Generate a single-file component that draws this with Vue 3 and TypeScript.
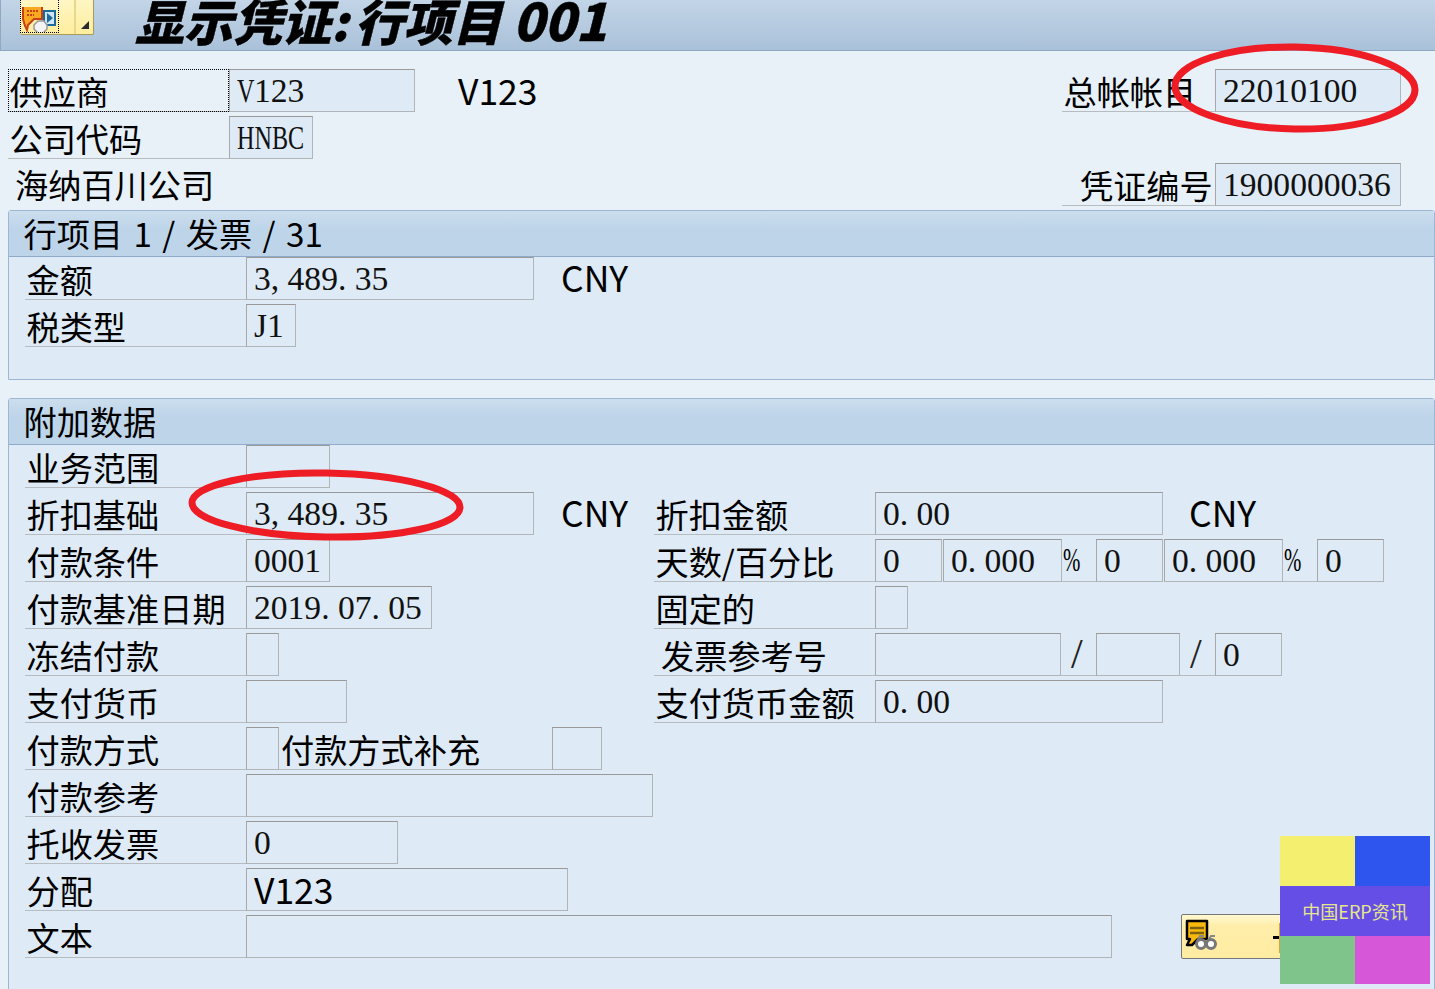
<script setup lang="ts">
interface Cell {
  kind: 'label' | 'field' | 'text' | 'gap'
  w: number
  text?: string
  narrow?: string
  narrowW?: number
  sans?: boolean
  line?: boolean
  sym?: 'pct' | 'slash'
  indent?: number
}

const lbl = (text: string, w = 221, indent = 1.5): Cell => ({ kind: 'label', w, text, indent })
const fld = (w: number, text = '', extra: Partial<Cell> = {}): Cell => ({ kind: 'field', w, text, ...extra })
const txt = (w: number, text: string, indent = 0): Cell => ({ kind: 'text', w, text, indent })
const gap = (w: number): Cell => ({ kind: 'gap', w })
const pct = (): Cell => ({ kind: 'text', w: 34, text: '%', indent: 1, sym: 'pct', line: true })
const slash = (indent: number): Cell => ({ kind: 'text', w: 35, text: '/', indent, sym: 'slash', line: true })

const topRows: Cell[][] = [
  [
    { ...lbl('供应商'), line: true },
    fld(186, '123', { narrow: 'V', narrowW: 17 }),
    txt(647, 'V123', 43),
    lbl('总帐帐目', 153),
    fld(186, '22010100')
  ],
  [lbl('公司代码'), fld(84, '', { narrow: 'HNBC', narrowW: 68 })],
  [
    txt(1054, '海纳百川公司', 7),
    lbl('凭证编号', 153, 18),
    fld(186, '1900000036')
  ]
]

const itemRows: Cell[][] = [
  [lbl('金额'), fld(288, '3, 489. 35'), txt(120, 'CNY', 27)],
  [lbl('税类型'), fld(50, 'J1')]
]

const extraRows: Cell[][] = [
  [lbl('业务范围'), fld(84)],
  [
    lbl('折扣基础'), fld(288, '3, 489. 35'), txt(120, 'CNY', 27),
    lbl('折扣金额'), fld(288, '0. 00'), txt(120, 'CNY', 26)
  ],
  [
    lbl('付款条件'), fld(84, '0001'), gap(324),
    lbl('天数/百分比'), fld(67, '0'), gap(1), fld(119, '0. 000'), pct(),
    fld(67, '0'), gap(1), fld(119, '0. 000'), pct(),
    fld(67, '0')
  ],
  [
    lbl('付款基准日期'), fld(186, '2019. 07. 05'), gap(222),
    lbl('固定的'), fld(33)
  ],
  [
    lbl('冻结付款'), fld(33), gap(375),
    lbl('发票参考号', 221, 7), fld(186), slash(10), fld(84), slash(10), fld(67, '0')
  ],
  [lbl('支付货币'), fld(101), gap(307), lbl('支付货币金额'), fld(288, '0. 00')],
  [lbl('付款方式'), fld(33), lbl('付款方式补充', 273, 2), fld(50)],
  [lbl('付款参考'), fld(407)],
  [lbl('托收发票'), fld(152, '0')],
  [lbl('分配'), fld(322, 'V123', { sans: true })],
  [lbl('文本'), fld(866)]
]

const cellStyle = (c: Cell) => ({ width: `${c.w}px`, paddingLeft: c.indent ? `${c.indent}px` : undefined })
const isLatin = (s = '') => /^[A-Z0-9]+$/.test(s)
</script>

<template>
  <div class="page">
    <header class="title-bar">
      <div class="tool-btn">
        <span class="tool-main">
          <svg width="36" height="32" viewBox="0 0 36 32">
            <rect x="23" y="4" width="11" height="14" fill="#cfe6f7" stroke="#1b6a9c" stroke-width="2" />
            <path d="M26 6l6 5-6 5z" fill="#1b6a9c" />
            <path d="M2 -2h19v14h-8l-6 6-1 5-2-4-2-7z" fill="#f9a91f" stroke="#c8401a" stroke-width="2" />
            <path d="M6 4h11M6 8h7" stroke="#c8401a" stroke-width="2" stroke-dasharray="2 1" />
            <path d="M17 14h6l3 4v4l-4 4h-5l-4-4v-4z" fill="#f4f4f4" stroke="#9a9a9a" stroke-width="1.5" />
          </svg>
        </span>
        <span class="tool-menu"><i></i></span>
      </div>
      <h1 class="title">显示凭证: 行项目 <span class="title-num">001</span></h1>
    </header>

    <section class="top-block">
      <div v-for="(row, r) in topRows" :key="r" class="row">
        <template v-for="(c, i) in row" :key="i">
          <div v-if="c.kind === 'label'" class="label" :class="{ focused: c.line }" :style="cellStyle(c)">{{ c.text }}</div>
          <div v-else-if="c.kind === 'field'" class="field" :style="cellStyle(c)"><span v-if="c.narrow" class="narrow" :style="{ width: `${c.narrowW}px` }">{{ c.narrow }}</span>{{ c.text }}</div>
          <div v-else class="plain" :class="{ latin: isLatin(c.text) }" :style="cellStyle(c)">{{ c.text }}</div>
        </template>
      </div>
    </section>

    <section class="group first">
      <div class="group-head">行项目 1 / 发票 / 31</div>
      <div v-for="(row, r) in itemRows" :key="r" class="row">
        <template v-for="(c, i) in row" :key="i">
          <div v-if="c.kind === 'label'" class="label" :style="cellStyle(c)">{{ c.text }}</div>
          <div v-else-if="c.kind === 'field'" class="field" :style="cellStyle(c)">{{ c.text }}</div>
          <div v-else class="plain" :class="{ latin: isLatin(c.text) }" :style="cellStyle(c)">{{ c.text }}</div>
        </template>
      </div>
    </section>

    <section class="group second">
      <div class="group-head">附加数据</div>
      <div v-for="(row, r) in extraRows" :key="r" class="row">
        <template v-for="(c, i) in row" :key="i">
          <div v-if="c.kind === 'label'" class="label" :style="cellStyle(c)">{{ c.text }}</div>
          <div v-else-if="c.kind === 'field'" class="field" :class="{ sans: c.sans }" :style="cellStyle(c)">{{ c.text }}</div>
          <div v-else-if="c.kind === 'gap'" :style="cellStyle(c)"></div>
          <div v-else class="plain" :class="{ latin: isLatin(c.text), under: c.line, slash: c.sym === 'slash', pct: c.sym === 'pct' }" :style="cellStyle(c)"><span v-if="c.sym === 'pct'" class="narrow pct-glyph">{{ c.text }}</span><template v-else>{{ c.text }}</template></div>
        </template>
      </div>
    </section>

    <button class="long-text">
      <svg width="36" height="36" viewBox="0 0 36 36">
        <path d="M3 2h20v18h-9l-6 6H3l3-6H3z" fill="#f9b90c" stroke="#000" stroke-width="2.5" stroke-linejoin="round" />
        <path d="M6 9h14M6 14h14" stroke="#7d6212" stroke-width="2.5" />
        <path d="M13 22l3-5h4M24 22l3-5h4" fill="none" stroke="#888" stroke-width="2" />
        <circle cx="17" cy="25" r="4.5" fill="#fff" stroke="#777" stroke-width="3" />
        <circle cx="27" cy="25" r="4.5" fill="#fff" stroke="#777" stroke-width="3" />
      </svg>
      <span class="mark-h"></span>
      <span class="mark-v"></span>
    </button>

    <div class="stamp">
      <div class="yellow"></div>
      <div class="blue"></div>
      <div class="purple">中国ERP资讯</div>
      <div class="green"></div>
      <div class="pink"></div>
    </div>

    <svg class="marks" width="1435" height="989" viewBox="0 0 1435 989">
      <ellipse cx="1295" cy="88" rx="120" ry="41" transform="rotate(1 1295 88)" />
      <ellipse cx="326" cy="505" rx="134" ry="32" transform="rotate(1 326 505)" />
    </svg>
  </div>
</template>

<style scoped>
.page {
  position: relative;
  width: 1435px;
  height: 989px;
  overflow: hidden;
  background: #e8f0f8;
  color: #000;
  font-family: "Noto Sans CJK SC", "Noto Sans", sans-serif;
  font-size: 33.2px;
}

.title-bar {
  display: flex;
  align-items: flex-start;
  height: 51px;
  box-sizing: border-box;
  padding-left: 19px;
  overflow: hidden;
  background: linear-gradient(#c3d5e7, #a9c1d9);
  border-bottom: 1px solid #8fa9c4;
  border-left: 1px solid #8fa9c4;
}

.tool-btn {
  display: flex;
  flex: none;
  height: 34px;
  width: 73px;
  background: linear-gradient(#fff6c4, #ffee9e);
  border-bottom: 1px solid #a89a5a;
  border-right: 1px solid #a89a5a;
  border-radius: 0 0 2px 2px;
}

.tool-main {
  flex: none;
  width: 39px;
  height: 33px;
  border: 1px dotted #000;
  border-top: none;
  box-sizing: border-box;
  overflow: hidden;
}

.tool-menu {
  position: relative;
  flex: 1;
  margin-left: 15px;
  border-left: 2px solid #e6d98e;
}

.tool-menu i {
  position: absolute;
  right: 4px;
  bottom: 5px;
  border-style: solid;
  border-width: 0 0 8px 8px;
  border-color: transparent transparent #2a2a33 transparent;
}

.title {
  margin: -11px 0 0 41px;
  font-size: 49px;
  line-height: 60px;
  font-weight: 900;
  font-style: italic;
  word-spacing: -5px;
  white-space: pre;
  -webkit-text-stroke: 0.4px #000;
}

.title-num {
  margin-left: 5px;
  font-size: 51.5px;
}

.top-block {
  padding: 18px 0 0 8px;
  height: 159px;
  box-sizing: border-box;
}

.top-block .plain {
  line-height: 42px;
}

.row {
  display: flex;
  height: 42px;
  margin-bottom: 5px;
}

.label {
  box-sizing: border-box;
  height: 43px;
  line-height: 44px;
  border-bottom: 1px solid #b7bcc1;
  white-space: nowrap;
  flex: none;
}

.focused {
  outline: 1px dotted #000;
  outline-offset: -1px;
}

.field {
  box-sizing: border-box;
  flex: none;
  height: 43px;
  padding: 0 0 0 7px;
  border: 1px solid #b2b5b8;
  border-top-color: #999;
  border-left-color: #a8a8a8;
  background: #deeaf5;
  font-family: "Liberation Serif", "Noto Sans CJK SC", serif;
  font-size: 33.6px;
  line-height: 41px;
  color: #111;
  white-space: pre;
  overflow: hidden;
}

.field.sans {
  font-family: "Noto Sans CJK SC", "Noto Sans", sans-serif;
  font-size: 35.5px;
  line-height: 40px;
  color: #000;
  overflow: visible;
}

.narrow {
  display: inline-block;
  transform: scaleX(0.72);
  transform-origin: left center;
}

.plain {
  flex: none;
  box-sizing: border-box;
  height: 43px;
  line-height: 40px;
  white-space: nowrap;
}

.latin {
  font-size: 35.5px;
}

.under {
  border-bottom: 1px solid #b7bcc1;
}

.slash {
  font-family: "Liberation Serif", serif;
  font-size: 42px;
  line-height: 43px;
  font-weight: 400;
  color: #222;
}

.pct {
  font-family: "Liberation Serif", serif;
  font-size: 33.6px;
  line-height: 41px;
}

.pct-glyph {
  transform: scaleX(0.62);
}

.group {
  box-sizing: border-box;
  margin-left: 8px;
  background: #deeaf5;
  border: 1px solid #9db7d2;
  border-radius: 3px 3px 0 0;
}

.first {
  height: 170px;
}

.second {
  margin-top: 18px;
  height: 600px;
}

.group-head {
  box-sizing: border-box;
  height: 46px;
  padding-left: 14.5px;
  line-height: 44px;
  word-spacing: 3px;
  background: linear-gradient(#cbdeee, #bed4e9 40%);
  border-bottom: 1px solid #8fabc9;
}

.group .row {
  padding-left: 16px;
}

.long-text {
  position: absolute;
  left: 1181px;
  top: 914px;
  width: 110px;
  height: 45px;
  padding: 4px 0 0 2px;
  text-align: left;
  background: linear-gradient(#fff8d2, #ffeeaa 25%, #ffeca2);
  border: 1px solid #777;
  border-radius: 2px;
}

.mark-h {
  position: absolute;
  left: 91px;
  top: 21px;
  width: 9px;
  height: 3px;
  background: #000;
}

.mark-v {
  position: absolute;
  left: 97px;
  top: 8px;
  width: 3px;
  height: 30px;
  background: #e2a12a;
}

.stamp {
  position: absolute;
  left: 1280px;
  top: 836px;
  display: grid;
  grid-template-columns: 75px 75px;
  grid-template-rows: 50px 50px 48px;
}

.yellow { background: #f5ef70; }
.blue { background: #2e55ee; }
.green { background: #7fc48a; }
.pink { background: #d657d8; }

.purple {
  grid-column: 1 / 3;
  background: #654ee6;
  color: #e6e68a;
  font-size: 18px;
  line-height: 50px;
  text-align: center;
}

.marks {
  position: absolute;
  left: 0;
  top: 0;
  pointer-events: none;
}

.marks ellipse {
  fill: none;
  stroke: #ee1c25;
  stroke-width: 7;
}
</style>
